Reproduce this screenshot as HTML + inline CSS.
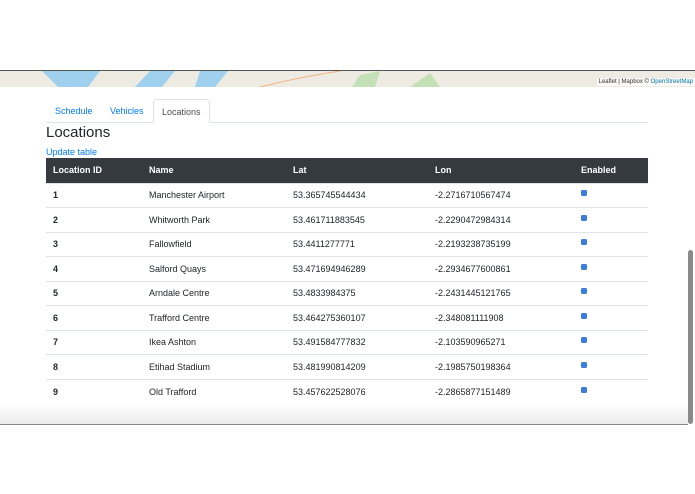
<!DOCTYPE html>
<html><head><meta charset="utf-8"><style>
*{margin:0;padding:0;box-sizing:border-box}
body{width:695px;height:494px;background:#fff;position:relative;overflow:hidden;font-family:"Liberation Sans",sans-serif;color:#212529}
.topline{position:absolute;left:0;top:70px;width:695px;height:1px;background:#555}
.map{position:absolute;left:0;top:71px;width:695px;height:16px;background:#eeebe3;overflow:hidden}
.attr{position:absolute;right:0;top:78px;font-size:6px;color:#333;background:rgba(255,255,255,.7);padding:0 2px;line-height:8px}
.attr span{color:#0078a8}
.tabs{position:absolute;left:46px;top:99px;width:602px;height:24px;border-bottom:1px solid #dee2e6}
.tab{position:absolute;top:0;height:24px;font-size:9px;line-height:25px;color:#007bff}
.tab.act{color:#495057;border:1px solid #dee2e6;border-bottom:1px solid #fff;border-radius:3px 3px 0 0;padding:0 8px;background:#fff}
h1{position:absolute;left:46px;top:124px;font-size:15px;font-weight:500}
.upd{position:absolute;left:46px;top:147px;font-size:9px;color:#007bff}
table{position:absolute;left:46px;top:158px;width:602px;border-collapse:collapse;font-size:9px}
th{background:#343a40;color:#fff;height:25px;text-align:left;font-weight:bold;padding-left:7px}
td{height:24.5px;border-top:1px solid #dee2e6;padding-left:7px}
td:first-child{font-weight:bold}
.cb{display:inline-block;width:6px;height:6px;background:#3b7ddd;border-radius:1.5px;margin-top:-5px;vertical-align:middle}
.fade{position:absolute;left:0;top:404px;width:688px;height:20px;background:linear-gradient(#fff,#ececec)}
.bline{position:absolute;left:0;top:424px;width:688px;height:1px;background:#888}
.sb{position:absolute;left:688px;top:250px;width:5px;height:174px;background:#8a8a8a;border-radius:3px}
</style></head><body>
<div class="topline"></div>
<div class="map">
<svg width="695" height="16" style="position:absolute;left:0;top:0">
<polygon points="42,0 100,0 88,16 58,16" fill="#9fd0ee"/>
<polygon points="150,0 175,0 162,16 135,16" fill="#9fd0ee"/>
<polygon points="200,0 228,0 215,16 195,16" fill="#9fd0ee"/>
<polygon points="360,4 380,0 375,16 352,16" fill="#c4e0b6"/>
<polygon points="410,16 430,2 440,16" fill="#c4e0b6"/>
<path d="M260 16 Q300 6 340 0" stroke="#f4b480" fill="none"/>
</svg>
</div>
<div class="attr">Leaflet | Mapbox © <span>OpenStreetMap</span></div>
<div class="tabs">
<div class="tab" style="left:9px">Schedule</div>
<div class="tab" style="left:64px">Vehicles</div>
<div class="tab act" style="left:107px">Locations</div>
</div>
<h1>Locations</h1>
<div class="upd">Update table</div>
<table>
<tr><th style="width:96px">Location ID</th><th style="width:144px">Name</th><th style="width:142px">Lat</th><th style="width:146px">Lon</th><th>Enabled</th></tr>
<tr><td>1</td><td>Manchester Airport</td><td>53.365745544434</td><td>-2.2716710567474</td><td><span class="cb"></span></td></tr>
<tr><td>2</td><td>Whitworth Park</td><td>53.461711883545</td><td>-2.2290472984314</td><td><span class="cb"></span></td></tr>
<tr><td>3</td><td>Fallowfield</td><td>53.4411277771</td><td>-2.2193238735199</td><td><span class="cb"></span></td></tr>
<tr><td>4</td><td>Salford Quays</td><td>53.471694946289</td><td>-2.2934677600861</td><td><span class="cb"></span></td></tr>
<tr><td>5</td><td>Arndale Centre</td><td>53.4833984375</td><td>-2.2431445121765</td><td><span class="cb"></span></td></tr>
<tr><td>6</td><td>Trafford Centre</td><td>53.464275360107</td><td>-2.348081111908</td><td><span class="cb"></span></td></tr>
<tr><td>7</td><td>Ikea Ashton</td><td>53.491584777832</td><td>-2.103590965271</td><td><span class="cb"></span></td></tr>
<tr><td>8</td><td>Etihad Stadium</td><td>53.481990814209</td><td>-2.1985750198364</td><td><span class="cb"></span></td></tr>
<tr><td>9</td><td>Old Trafford</td><td>53.457622528076</td><td>-2.2865877151489</td><td><span class="cb"></span></td></tr>
</table>
<div class="fade"></div>
<div class="bline"></div>
<div class="sb"></div>
</body></html>
